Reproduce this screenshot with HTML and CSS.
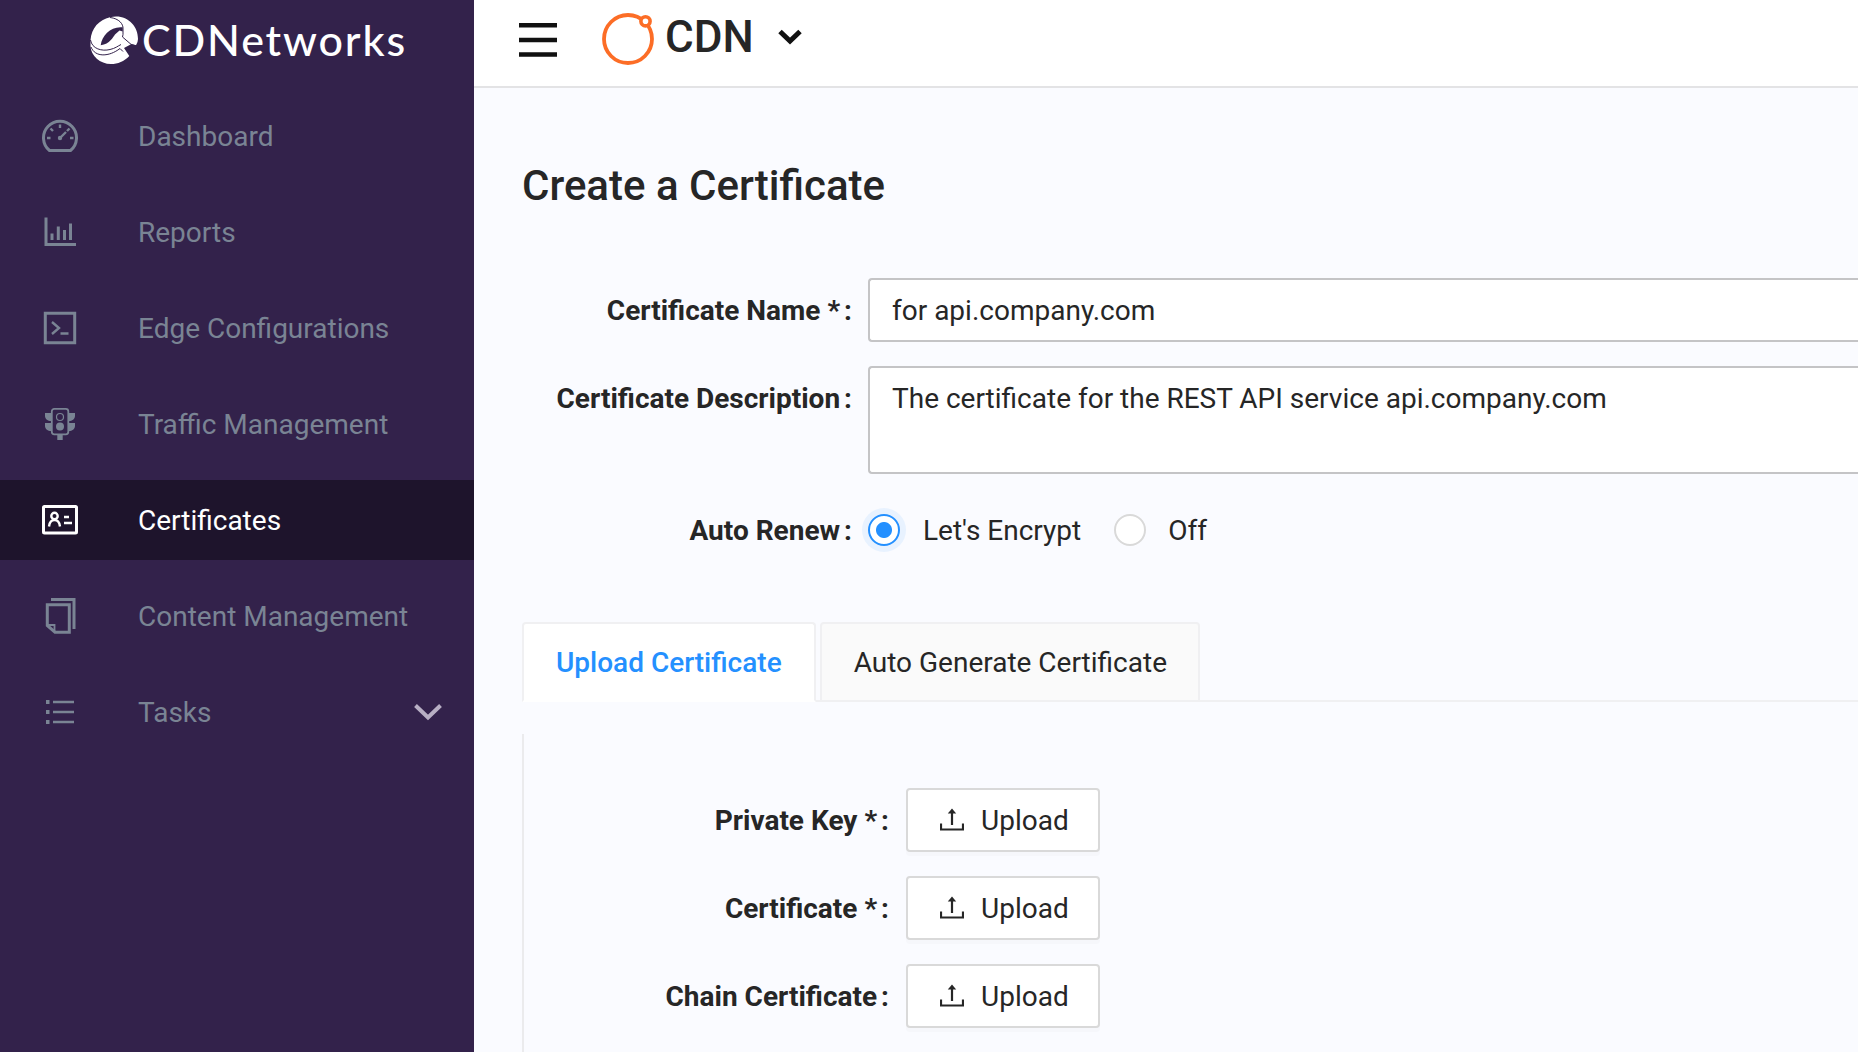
FILE: index.html
```html
<!DOCTYPE html>
<html lang="en">
<head>
<meta charset="utf-8">
<title>Create a Certificate</title>
<link rel="stylesheet" href="styles.css">
</head>
<body>
<div class="app">
  <aside class="sidebar">
    <div class="brand">
      <svg class="brand-mark" width="48" height="48" viewBox="0 0 48 48">
        <path fill="#fff" d="M20 1.300C36-2.500 48 9 48 23Q48 26 46 29.300L41 28.300L34 32L39.300 40C34 45.500 28 48 21 48C10 48 1 40 .5 30V24C1.500 12 9 4 20 1.300Z"/>
        <path fill="#33224b" d="M10.700 29.300C12 19 21 10 32.700 11.300V15.500L29.500 14.500L25 18.500C23 21 20 28 10.700 29.300Z"/>
        <path class="brand-line" d="M20 1.500C29 2.500 33.500 8 33 13V18.500L32.500 21L41 28.300L47 30M.5 24C2 33 12 35.500 20 33.500C25 32.500 28 30 31 28.500M1 31C5 41.500 19 41 30 32.500L33 35.500"/>
      </svg>
      <span class="brand-name">CDNetworks</span>
    </div>
    <nav class="menu">
      <a class="item">
        <svg class="icon" width="36" height="36" viewBox="0 0 36 36"><path class="line" d="M7.500 32.500A16.500 16.500 0 1 1 28.500 32.500Z"/><path class="line thin" d="M5 20H8.500M28 20H31.500M18 6.500V10M8.500 10.500L11 13M27.500 10.500L25 13M18 20L24 14"/><circle class="solid" cx="18" cy="20" r="2.200"/></svg>
        <span>Dashboard</span>
      </a>
      <a class="item">
        <svg class="icon" width="36" height="36" viewBox="0 0 36 36"><path class="line" d="M4 3.500V30.500H34"/><path class="line" d="M10 19.500V26M16.300 12.500V26M22.500 16V26M28.500 9.500V26"/></svg>
        <span>Reports</span>
      </a>
      <a class="item">
        <svg class="icon" width="36" height="36" viewBox="0 0 36 36"><path class="line" d="M3.300 3.300H32.700V32.700H3.300Z"/><path class="line thin" d="M10 12L17 18L10 24M18.500 23.500H26.500"/></svg>
        <span>Edge Configurations</span>
      </a>
      <a class="item">
        <svg class="icon" width="36" height="36" viewBox="0 0 36 36"><rect class="line narrow" x="9.800" y="2.800" width="16.500" height="25.500" rx="2.500"/><circle class="line hair" cx="18" cy="11" r="3.500"/><circle class="solid" cx="18" cy="20.500" r="4"/><path class="solid" d="M3 7H9V15C6 15 3 13 3 10ZM3 17H9V25C6 25 3 23 3 20ZM33 7H27V15C30 15 33 13 33 10ZM33 17H27V25C30 25 33 23 33 20ZM15.300 28H20.700V34H15.300Z"/></svg>
        <span>Traffic Management</span>
      </a>
      <a class="item active">
        <svg class="icon" width="36" height="36" viewBox="0 0 36 36"><rect class="line" x="1.500" y="4.500" width="33" height="26.500" rx="1"/><circle class="line thin" cx="12.500" cy="14" r="3.200"/><path class="line thin" d="M7 24.500C7.500 20.500 9.500 18 12.500 18S17.500 20.500 18 24.500M22 15H27M22 21H30"/></svg>
        <span>Certificates</span>
      </a>
      <a class="item">
        <svg class="icon" width="36" height="36" viewBox="0 0 36 36"><path class="line" d="M5.300 6.800H27.300V34.200H13L5.300 27.500Z"/><path class="line" d="M9 1.500H32V31"/><path class="line narrow" d="M5.500 27H12.500V34"/></svg>
        <span>Content Management</span>
      </a>
      <a class="item">
        <svg class="icon" width="36" height="36" viewBox="0 0 36 36"><path class="line thin" d="M11 8H32M11 18H32M11 28H32"/><path class="solid" d="M4 6h3.500v4h-3.500ZM4 16h3.500v4h-3.500ZM4 26h3.500v4h-3.500Z"/></svg>
        <span>Tasks</span>
        <svg class="expand" width="28" height="18" viewBox="0 0 28 18"><path d="M1.500 2.500L14 14.500L26.500 2.500"/></svg>
      </a>
    </nav>
  </aside>
  <div class="page">
    <header class="topbar">
      <svg class="burger" width="38" height="34" viewBox="0 0 38 34"><path d="M0 2.300H38M0 17H38M0 31.500H38"/></svg>
      <svg class="product-mark" width="52" height="52" viewBox="0 0 52 52"><circle cx="26" cy="26" r="24"/><circle class="moon" cx="43.500" cy="8.300" r="4.600"/></svg>
      <span class="product">CDN</span>
      <svg class="switch" width="24" height="16" viewBox="0 0 24 16"><path d="M2 2.500L12 12L22 2.500"/></svg>
    </header>
    <main class="content">
      <h1>Create a Certificate</h1>
      <div class="form">
        <div class="row">
          <label>Certificate Name *<i>:</i></label>
          <div class="field">for api.company.com</div>
        </div>
        <div class="row">
          <label>Certificate Description<i>:</i></label>
          <div class="field area">The certificate for the REST API service api.company.com</div>
        </div>
        <div class="row renew">
          <label>Auto Renew<i>:</i></label>
          <div class="choices">
            <span class="radio on"></span><span class="choice first">Let's Encrypt</span>
            <span class="radio"></span><span class="choice">Off</span>
          </div>
        </div>
      </div>
      <div class="tabs">
        <div class="tab current">Upload Certificate</div>
        <div class="tab">Auto Generate Certificate</div>
      </div>
      <div class="panel">
        <div class="row">
          <label>Private Key *<i>:</i></label>
          <div class="upload"><svg width="24" height="24" viewBox="0 0 24 24"><path class="tray" d="M1 15.500V21.500H23V15.500M12 17V5"/><path class="tip" d="M12 .5L16.200 5.500H7.800Z"/></svg><span>Upload</span></div>
        </div>
        <div class="row">
          <label>Certificate *<i>:</i></label>
          <div class="upload"><svg width="24" height="24" viewBox="0 0 24 24"><path class="tray" d="M1 15.500V21.500H23V15.500M12 17V5"/><path class="tip" d="M12 .5L16.200 5.500H7.800Z"/></svg><span>Upload</span></div>
        </div>
        <div class="row">
          <label>Chain Certificate<i>:</i></label>
          <div class="upload"><svg width="24" height="24" viewBox="0 0 24 24"><path class="tray" d="M1 15.500V21.500H23V15.500M12 17V5"/><path class="tip" d="M12 .5L16.200 5.500H7.800Z"/></svg><span>Upload</span></div>
        </div>
      </div>
    </main>
  </div>
</div>
</body>
</html>
```
FILE: styles.css
```css
* { box-sizing: border-box; }
body {
  margin: 0;
  overflow: hidden;
  font: 28px/40px Roboto, "Liberation Sans", sans-serif;
  color: #262626;
  background: #fafbff;
}
svg { display: block; flex: none; fill: none; }
.app { display: flex; height: 1052px; overflow: hidden; }

.sidebar { flex: none; width: 474px; background: #33224b; }
.brand { display: flex; align-items: center; gap: 4px; height: 80px; padding: 0 0 0 90px; }
.brand-line { stroke: #33224b; stroke-width: 1; }
.brand-name {
  color: #fff;
  font-family: Lato, sans-serif;
  font-size: 43px;
  font-weight: 500;
  letter-spacing: 1.850px;
  white-space: nowrap;
}
.menu { display: flex; flex-direction: column; gap: 16px; padding-top: 16px; }
.item {
  display: flex;
  align-items: center;
  height: 80px;
  padding: 0 32px 0 42px;
  color: #7a8494;
  white-space: nowrap;
}
.item span { margin-left: 60px; padding-top: 2px; }
.item.active { color: #fff; background: #1e142c; }
.line { stroke: currentColor; stroke-width: 3; }
.thin { stroke-width: 2.400; }
.narrow { stroke-width: 1.8; }
.hair { stroke-width: 1.2; }
.solid { fill: currentColor; }
.expand { margin-left: auto; stroke: #b8afc4; stroke-width: 4; }

.page { flex: 1; min-width: 0; }
.topbar {
  display: flex;
  align-items: center;
  height: 88px;
  padding: 0 0 9px 45px;
  background: #fff;
  border-bottom: 2px solid #e3e3e5;
}
.burger { margin-top: 3px; stroke: #111; stroke-width: 4.400; }
.product-mark { margin: 0 11px 0 45px; stroke: #fc6d26; stroke-width: 3.800; overflow: visible; }
.moon { fill: #fff; stroke-width: 3.600; }
.product { padding-bottom: 3px; font-size: 44px; font-weight: 500; }
.switch { margin: 0 0 4px 24px; stroke: #111; stroke-width: 5; }

.content { padding: 74px 0 0 48px; }
h1 { margin: 0; font-size: 42px; line-height: 48px; font-weight: 500; }
.form { display: flex; flex-direction: column; gap: 24px; margin-top: 68px; }
.row { display: flex; }
.row label {
  flex: none;
  width: 330px;
  padding-top: 13px;
  text-align: right;
  font-weight: 700;
  white-space: nowrap;
}
.row i { margin-left: 4px; font-style: normal; }
.field {
  flex: 1;
  height: 64px;
  margin-left: 16px;
  padding: 11px 22px;
  background: #fff;
  border: 2px solid #c4c4c6;
  border-right: 0;
  border-radius: 4px 0 0 4px;
  white-space: nowrap;
}
.area { height: 108px; }
.row.renew { height: 40px; margin-top: 12px; }
.renew label { padding-top: 1px; }
.choices { display: flex; align-items: center; margin-left: 16px; }
.radio { width: 32px; height: 32px; border: 2px solid #d9d9d9; border-radius: 50%; background: #fff; }
.radio.on {
  border-color: #2490ff;
  background: radial-gradient(circle, #2490ff 7.500px, #fff 8.500px);
  box-shadow: 0 0 0 6px #e8f2ff;
}
.choice { margin-left: 22px; padding-top: 2px; }
.first { margin: 0 33px 0 23px; }

.tabs { display: flex; gap: 4px; margin-top: 72px; box-shadow: inset 0 -2px #f0f0f2; }
.tab {
  height: 80px;
  padding: 19px 31px 0 32px;
  background: #fafafa;
  border: 2px solid #f0f0f2;
  border-radius: 4px 4px 0 0;
  white-space: nowrap;
}
.current {
  padding-right: 32px;
  color: #2490ff;
  font-weight: 500;
  background: #fff;
  border-bottom-color: #fff;
}
.panel {
  display: flex;
  flex-direction: column;
  gap: 24px;
  height: 400px;
  margin-top: 32px;
  padding-top: 54px;
  border-left: 2px solid #ebebed;
}
.panel label { width: 365px; }
.upload {
  display: flex;
  align-items: center;
  gap: 17px;
  width: 194px;
  height: 64px;
  margin-left: 17px;
  padding-left: 32px;
  background: #fff;
  border: 2px solid #d9d9d9;
  border-radius: 4px;
  box-shadow: 0 4px #f6f7fb;
}
.upload span { padding-top: 2px; }
.tray { stroke: #262626; stroke-width: 2.200; }
.tip { fill: #262626; }
```
